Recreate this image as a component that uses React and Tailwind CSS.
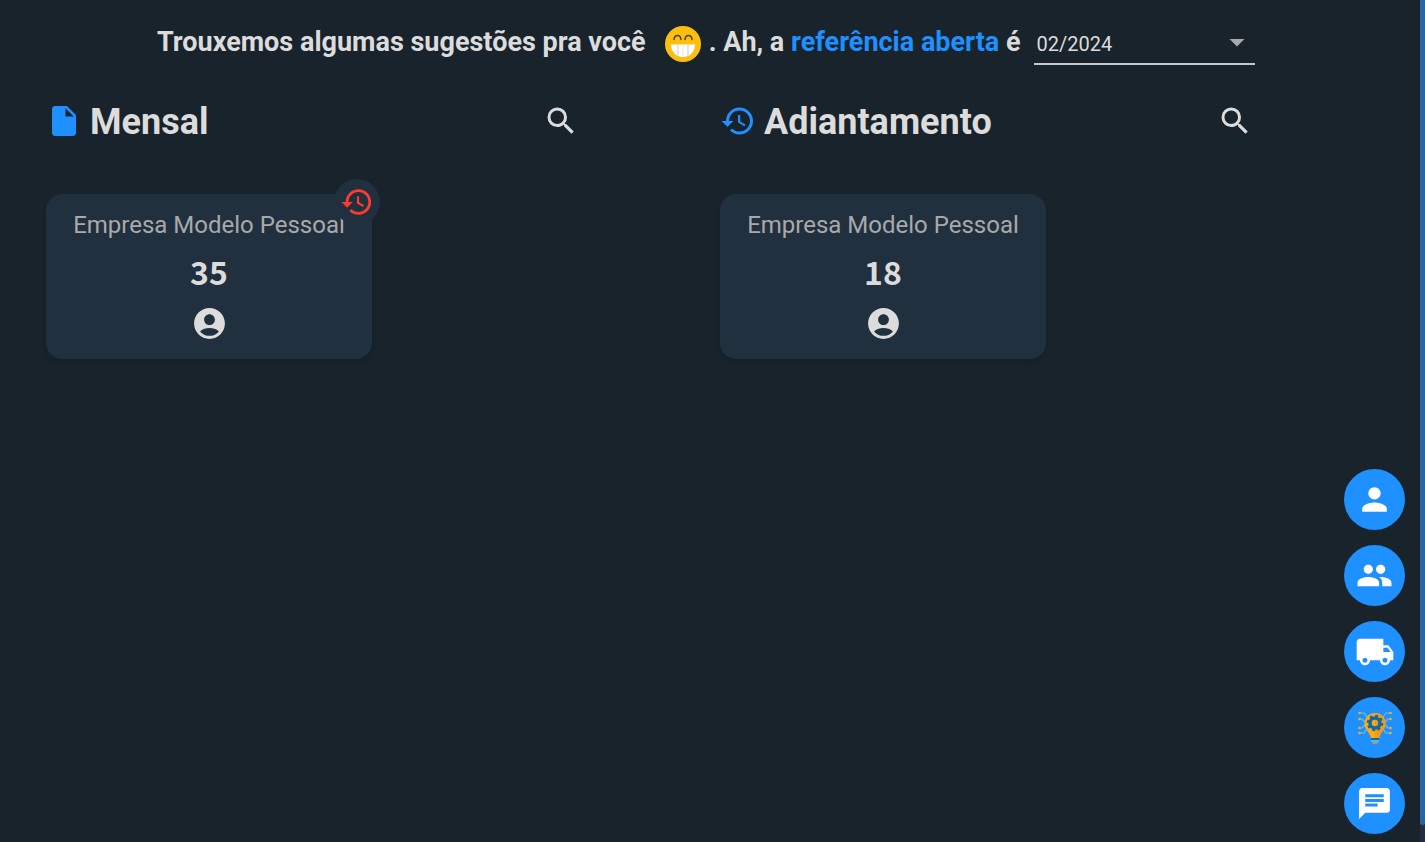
import {
  MdAccountCircle,
  MdArrowDropDown,
  MdChat,
  MdHistory,
  MdInsertDriveFile,
  MdLocalShipping,
  MdPeople,
  MdPerson,
  MdSearch,
} from "react-icons/md";

function GrinIcon() {
  return (
    <svg viewBox="0 0 36 36" className="w-9 h-9 shrink-0" aria-label="sorriso">
      <circle cx="18" cy="18" r="18" fill="#fdbf0f" />
      <path
        d="M9 13.500c.5-5.500 6.500-5.500 7 0M20 13.500c.5-5.500 6.500-5.500 7 0"
        fill="none"
        stroke="#4f4020"
        strokeWidth="1.5"
        strokeLinecap="round"
      />
      <path d="M6 18.500h24c0 7-5 12.500-12 12.500S6 25.500 6 18.500z" fill="#fff" />
      <path d="M13 19v10.500M23 19v10.500" stroke="#c9c9c9" strokeWidth="1" />
      <path d="M18 19v12" stroke="#e6e6e6" strokeWidth="1" />
    </svg>
  );
}

function IdeaIcon() {
  return (
    <svg viewBox="0 0 36 36" className="w-9 h-9">
      <g fill="none" stroke="#7fc0c0" strokeWidth="1.2">
        <path d="M3 3h4l3 4M2 9h3l3 3M2 18h3l3-3M3 23h4l3-4" />
        <path d="M33 3h-4l-3 4M34 9h-3l-3 3M34 18h-3l-3-3M33 23h-4l-3-4" />
      </g>
      <g fill="#fbab18">
        <circle cx="2.500" cy="3" r="1.300" />
        <circle cx="2.500" cy="9" r="1.300" />
        <circle cx="2.500" cy="18" r="1.300" />
        <circle cx="2.500" cy="23" r="1.300" />
        <circle cx="33.500" cy="3" r="1.300" />
        <circle cx="33.500" cy="9" r="1.300" />
        <circle cx="33.500" cy="18" r="1.300" />
        <circle cx="33.500" cy="23" r="1.300" />
      </g>
      <path
        d="M18 3C12 3 7.500 7.500 7.500 13.500c0 4 2 6 4 9 1 1.700 2 3 2.300 5.500h8.400c.3-2.500 1.300-3.800 2.300-5.500 2-3 4-5 4-9C28.500 7.500 24 3 18 3z"
        fill="#fbab18"
      />
      <path d="M18 3c6 0 10.500 4.500 10.500 10.500 0 4-2 6-4 9-1 1.700-2 3-2.300 5.500H18z" fill="#f39a1c" />
      <circle cx="18" cy="13" r="5" fill="none" stroke="#12699e" strokeWidth="3.500" />
      <circle cx="18" cy="13" r="7" fill="none" stroke="#12699e" strokeWidth="2.500" strokeDasharray="2.750 2.750" />
      <path d="M14 28h8v2h-8z" fill="#12699e" />
      <path d="M14 30h8v2h-8z" fill="#62b5c4" />
      <path d="M15 32h6c0 3-6 3-6 0z" fill="#9b9b9b" />
    </svg>
  );
}

const actions = [
  { label: "Colaborador", icon: <MdPerson className="size-[37px]" /> },
  { label: "Equipe", icon: <MdPeople className="size-[37px]" /> },
  { label: "Fornecedor", icon: <MdLocalShipping className="size-[40px]" /> },
  { label: "Ideias", icon: <IdeaIcon /> },
  { label: "Chat", icon: <MdChat className="size-[37px]" /> },
];

function CompanyCard({ name, total, pending }) {
  return (
    <div className="relative w-[326px] rounded-2xl bg-[#20303f] pt-[13px] pb-[17px] shadow-md flex flex-col items-center">
      <p className="text-2xl leading-9 text-[#a9a9a9] whitespace-nowrap">{name}</p>
      <p className="mt-2.5 text-[32px] leading-9 font-bold font-['Noto_Sans_CJK_JP',sans-serif]">{total}</p>
      <MdAccountCircle className="mt-4 size-[37px]" />
      {pending && (
        <span className="absolute -top-[15px] -right-2 size-[46px] rounded-full bg-[#20303f] flex items-center justify-center">
          <MdHistory className="size-[34px] text-[#ff3b30]" />
        </span>
      )}
    </div>
  );
}

function Column({ title, icon, children }) {
  return (
    <section className="w-[541px]">
      <div className="flex items-center justify-between">
        <h2 className="flex items-center gap-2 text-4xl leading-10 font-bold">
          {icon}
          <span className="pt-0.5">{title}</span>
        </h2>
        <button type="button" aria-label={`Buscar em ${title}`} className="mr-2">
          <MdSearch className="size-9" />
        </button>
      </div>
      <div className="mt-[52px]">{children}</div>
    </section>
  );
}

export default function App() {
  return (
    <div className="flex min-h-screen bg-[#19232b] text-[#dcdcdc] font-['Roboto',sans-serif]">
      <main className="flex-1 pl-[46px] pt-5">
        <div className="flex items-center pl-[111px] h-[45px] text-[27px] leading-9 font-bold whitespace-nowrap">
          <span className="pb-0.5">Trouxemos algumas sugestões pra você</span>
          <span className="ml-[19px] mr-2 pt-0.5">
            <GrinIcon />
          </span>
          <label htmlFor="reference" className="pb-0.5">
            . Ah, a <span className="text-[#1e90ff]">referência aberta</span> é
          </label>
          <div className="relative ml-[13px] w-[221px]">
            <select
              id="reference"
              className="w-full h-[45px] appearance-none border-b-2 border-[#c8c8c8] bg-transparent pt-1 pl-[3px] text-xl font-normal"
            >
              <option>02/2024</option>
            </select>
            <MdArrowDropDown className="pointer-events-none absolute right-0 top-1 size-9 text-[#a9a9a9]" />
          </div>
        </div>

        <div className="mt-[35px] flex gap-[133px]">
          <Column title="Mensal" icon={<MdInsertDriveFile className="size-9 text-[#1e90ff]" />}>
            <CompanyCard name="Empresa Modelo Pessoal" total={35} pending />
          </Column>
          <Column title="Adiantamento" icon={<MdHistory className="size-9 text-[#1e90ff]" />}>
            <CompanyCard name="Empresa Modelo Pessoal" total={18} />
          </Column>
        </div>
      </main>

      <nav className="fixed right-5 bottom-2 flex flex-col gap-[15px]">
        {actions.map((action) => (
          <button
            key={action.label}
            type="button"
            aria-label={action.label}
            className="flex size-[61px] items-center justify-center rounded-full bg-[#1e90ff] text-white"
          >
            {action.icon}
          </button>
        ))}
      </nav>

      {/* page scroll indicator */}
      <div className="fixed inset-y-0 right-0 w-[5px] bg-[#212f3f]">
        <div className="h-[98%] rounded-b-full bg-[#2765a5]" />
      </div>
    </div>
  );
}
